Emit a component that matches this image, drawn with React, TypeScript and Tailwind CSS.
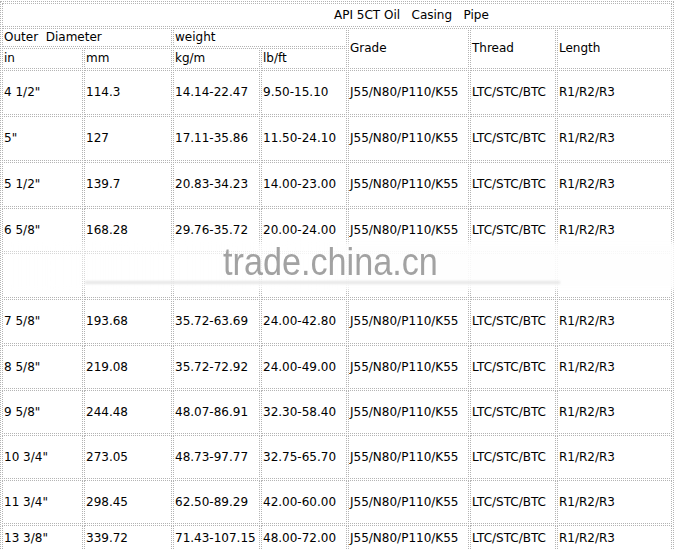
const line = 'border border-dotted border-[#b4b4b4]';
const cell = `${line} p-0 pl-[1px] align-middle text-left font-normal whitespace-pre`;

const sizes = [
  { inch: '4 1/2"', mm: '114.3', kg: '14.14-22.47', lb: '9.50-15.10', h: 'h-[45px]' },
  { inch: '5"', mm: '127', kg: '17.11-35.86', lb: '11.50-24.10', h: 'h-[45px]' },
  { inch: '5 1/2"', mm: '139.7', kg: '20.83-34.23', lb: '14.00-23.00', h: 'h-[45px]' },
  { inch: '6 5/8"', mm: '168.28', kg: '29.76-35.72', lb: '20.00-24.00', h: 'h-[44px]' },
  { inch: '', mm: '', kg: '', lb: '', h: 'h-[45px]', blank: true },
  { inch: '7 5/8"', mm: '193.68', kg: '35.72-63.69', lb: '24.00-42.80', h: 'h-[45px]' },
  { inch: '8 5/8"', mm: '219.08', kg: '35.72-72.92', lb: '24.00-49.00', h: 'h-[44px]' },
  { inch: '9 5/8"', mm: '244.48', kg: '48.07-86.91', lb: '32.30-58.40', h: 'h-[44px]' },
  { inch: '10 3/4"', mm: '273.05', kg: '48.73-97.77', lb: '32.75-65.70', h: 'h-[44px]' },
  { inch: '11 3/4"', mm: '298.45', kg: '62.50-89.29', lb: '42.00-60.00', h: 'h-[44px]' },
  { inch: '13 3/8"', mm: '339.72', kg: '71.43-107.15', lb: '48.00-72.00', h: 'h-[26px]' },
];

const Watermark = () => (
  <div className="pointer-events-none absolute left-0 right-0 top-[242px] h-[48px]">
    <div className="absolute left-[4px] right-0 top-0 bottom-0 bg-gradient-to-r from-white/40 via-white/90 to-white/90 blur-[2px]" />
    <div className="absolute left-[85px] w-[475px] top-[39px] h-[3px] bg-[#e6e6e6] blur-[1px]" />
    <div
      className="absolute left-[223px] top-[-2px] origin-left scale-x-90 text-[38px] leading-[44px] text-[#a2a2a2] whitespace-nowrap"
      style={{ fontFamily: '"Liberation Sans", Arial, sans-serif' }}
    >
      trade.china.cn
    </div>
  </div>
);

export default function App() {
  return (
    <div className="relative w-[676px] h-[549px] overflow-hidden bg-white pt-[1px]">
      <table
        className={`${line} w-[674px] table-fixed border-separate border-spacing-[1px] text-[12px] leading-[15px] text-black`}
        style={{ fontFamily: '"DejaVu Sans", Verdana, sans-serif' }}
      >
        <colgroup>
          <col className="w-[81px]" />
          <col className="w-[88px]" />
          <col className="w-[87px]" />
          <col className="w-[86px]" />
          <col className="w-[121px]" />
          <col className="w-[86px]" />
          <col className="w-[115px]" />
        </colgroup>
        <tbody>
          <tr>
            <td colSpan={7} className={`${cell} h-[24px] pl-[331px]`}>
              API 5CT Oil   Casing   Pipe
            </td>
          </tr>
          <tr>
            <td colSpan={2} className={`${cell} h-[19px]`}>
              Outer  Diameter
            </td>
            <td colSpan={2} className={`${cell} h-[19px]`}>
              weight
            </td>
            <td rowSpan={2} className={cell}>
              Grade
            </td>
            <td rowSpan={2} className={cell}>
              Thread
            </td>
            <td rowSpan={2} className={cell}>
              Length
            </td>
          </tr>
          <tr>
            <td className={`${cell} h-[21px]`}>in</td>
            <td className={`${cell} h-[21px]`}>mm</td>
            <td className={`${cell} h-[21px]`}>kg/m</td>
            <td className={`${cell} h-[21px]`}>lb/ft</td>
          </tr>
          {sizes.map((s, i) => (
            <tr key={i}>
              <td className={`${cell} ${s.h}`}>{s.inch}</td>
              <td className={`${cell} ${s.h}`}>{s.mm}</td>
              <td className={`${cell} ${s.h}`}>{s.kg}</td>
              <td className={`${cell} ${s.h}`}>{s.lb}</td>
              <td className={`${cell} ${s.h}`}>{s.blank ? '' : 'J55/N80/P110/K55'}</td>
              <td className={`${cell} ${s.h}`}>{s.blank ? '' : 'LTC/STC/BTC'}</td>
              <td className={`${cell} ${s.h}`}>{s.blank ? '' : 'R1/R2/R3'}</td>
            </tr>
          ))}
        </tbody>
      </table>
      <Watermark />
    </div>
  );
}
